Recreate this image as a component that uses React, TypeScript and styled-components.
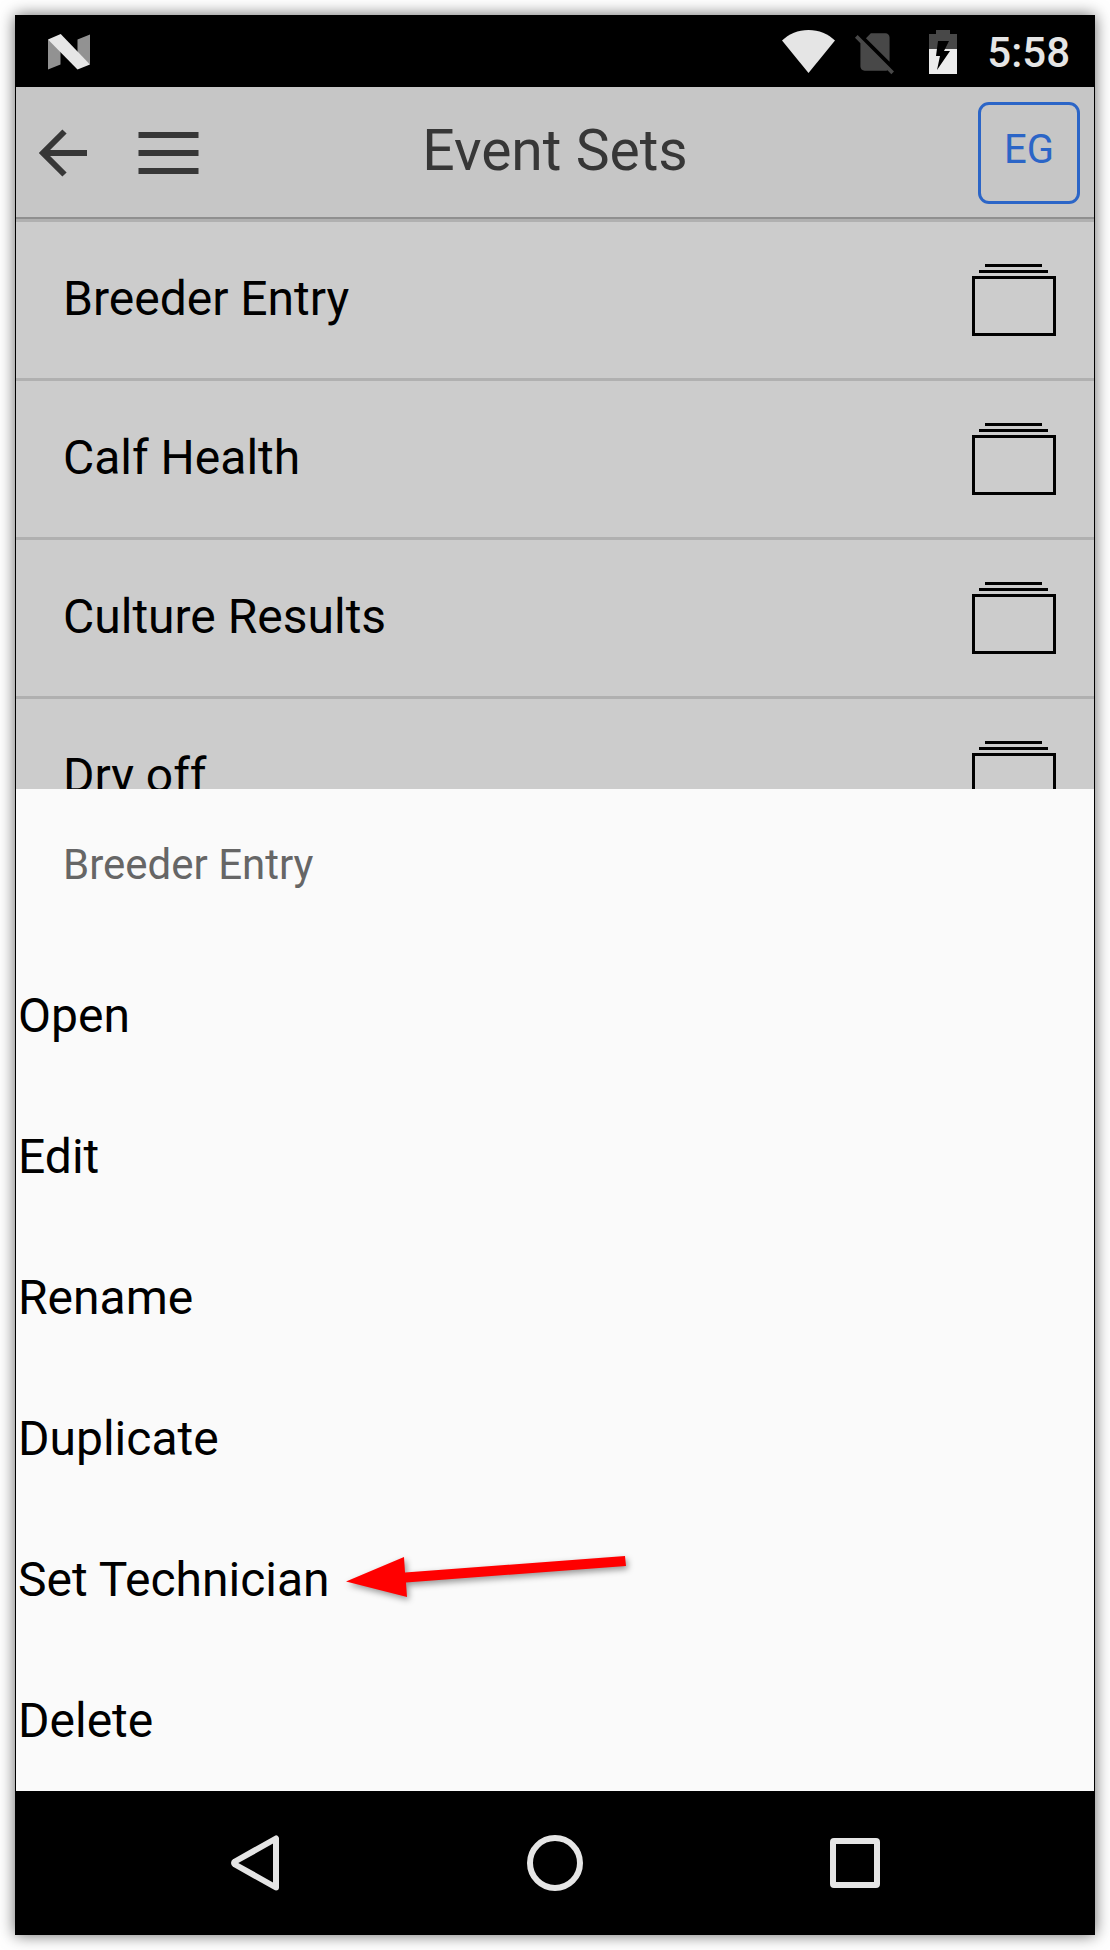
import React from "react";
import styled, { createGlobalStyle } from "styled-components";

const GlobalStyle = createGlobalStyle`
  *, *::before, *::after { box-sizing: border-box; }
  body {
    margin: 0;
    background: #ffffff;
    font-family: Roboto, "Noto Sans", sans-serif;
    color: #000000;
  }
  h1, h2, ul, p { margin: 0; padding: 0; font-weight: 400; }
  ul { list-style: none; }
  button {
    margin: 0;
    padding: 0;
    border: 0;
    background: none;
    color: inherit;
    font: inherit;
    cursor: pointer;
  }
  svg { display: block; flex: none; }
`;

const Page = styled.div`
  display: flex;
  min-height: 100vh;
  padding: 15px;
`;

const Device = styled.div`
  flex: 1;
  min-width: 0;
  display: flex;
  flex-direction: column;
  border: 1px solid #000000;
  background: #cccccc;
  box-shadow: 0 0 15px rgba(0, 0, 0, 0.6);
`;

const StatusBar = styled.div`
  display: flex;
  align-items: center;
  justify-content: space-between;
  height: 71px;
  padding: 0 24px 0 32px;
  background: #000000;
  color: #e5e5e5;
`;

const StatusIcons = styled.div`
  display: flex;
  align-items: center;
`;

const SimIcon = styled.svg`
  margin-left: 15px;
`;

const BatteryIcon = styled.svg`
  margin-left: 29px;
`;

const Clock = styled.time`
  margin-left: 30px;
  padding-top: 2px;
  font-size: 42px;
  line-height: 48px;
  font-weight: 500;
`;

const Toolbar = styled.header`
  display: grid;
  grid-template-columns: 1fr auto 1fr;
  align-items: center;
  padding: 15px 14px 13px;
  border-bottom: 2px solid #8f8f8f;
  background: #c6c6c6;
  color: #373737;
`;

const ToolbarStart = styled.nav`
  display: flex;
  align-items: center;
  gap: 51px;
  padding-left: 9px;
`;

const Title = styled.h1`
  padding-bottom: 4px;
  font-size: 57px;
  line-height: 68px;
`;

const ProfileButton = styled.button`
  justify-self: end;
  width: 102px;
  height: 102px;
  && {
    padding-bottom: 7px;
    border: 3px solid #2b65c7;
    border-radius: 11px;
    color: #2b65c7;
    font-size: 40px;
    line-height: 48px;
  }
`;

const SetList = styled.ul`
  flex: 1 1 0;
  min-height: 0;
  overflow: hidden;
`;

const SetRow = styled.li`
  display: flex;
  align-items: center;
  justify-content: space-between;
  height: 159px;
  padding: 0 38px 0 47px;
  border-top: 3px solid #b0b0b0;
`;

const SetName = styled.span`
  padding-bottom: 3px;
  font-size: 48px;
  line-height: 56px;
`;

const Sheet = styled.section`
  flex: none;
  background: #fafafa;
`;

const SheetTitle = styled.h2`
  padding: 52px 47px 56px;
  color: #666666;
  font-size: 42px;
  line-height: 48px;
`;

const ActionItem = styled.li`
  position: relative;
`;

const ActionButton = styled.button`
  display: block;
  width: 100%;
  && {
    padding: 43px 2px 42px;
    font-size: 48px;
    line-height: 56px;
    text-align: left;
  }
`;

const Pointer = styled.svg`
  position: absolute;
  left: 324px;
  top: 41px;
  pointer-events: none;
  filter: drop-shadow(2px 3px 3px rgba(0, 0, 0, 0.4));
`;

const NavBar = styled.nav`
  flex: none;
  display: flex;
  justify-content: center;
  height: 143px;
  background: #000000;
`;

const NavButton = styled.button`
  display: flex;
  align-items: center;
  justify-content: center;
  flex: 0 1 300px;
`;

const eventSets = ["Breeder Entry", "Calf Health", "Culture Results", "Dry off"];

const actions = ["Open", "Edit", "Rename", "Duplicate", "Set Technician", "Delete"];

const highlightedAction = "Set Technician";

function StackIcon() {
  return (
    <svg width="84" height="72" viewBox="0 0 84 72" aria-hidden="true">
      <path d="M13 0h57v3H13zM7 6h69v3H7z" fill="#000" />
      <rect x="1.5" y="13.5" width="81" height="57" fill="none" stroke="#000" strokeWidth="3" />
    </svg>
  );
}

export default function App() {
  return (
    <Page>
      <GlobalStyle />
      <Device>
        <StatusBar>
          <svg width="42" height="36" viewBox="0 0 42 36" aria-hidden="true">
            <path d="M0 5.5V35.5L12.5 30.5V12zM29.500 5.500L42 .5V30.500L29.500 20z" fill="#929292" />
            <path d="M0 5.500L12.700 0L42 30.500L29.500 35.500z" fill="#e6e6e6" />
          </svg>
          <StatusIcons>
            <svg width="53" height="43" viewBox="0 0 53 43" aria-hidden="true">
              <path d="M0 10.500C7 4 16 0 26.500 0S46 4 53 10.500L26.500 43z" fill="#e5e5e5" />
            </svg>
            <SimIcon width="50" height="50" viewBox="0 0 24 24" aria-hidden="true">
              <path
                d="M18.990 5c0-1.100-.890-2-1.990-2h-7L7.660 5.340 19 16.680 18.990 5zM3.650 3.880L2.380 5.150 5 7.770V19c0 1.100.900 2 2 2h10.010c.350 0 .670-.100.960-.260l1.880 1.880 1.270-1.270L3.650 3.880z"
                fill="#484848"
              />
            </SimIcon>
            <BatteryIcon width="28" height="44" viewBox="0 0 28 44" aria-hidden="true">
              <path d="M7 0h14v4h7v16H0V4h7z" fill="#484848" />
              <path d="M0 19h28v25H0z" fill="#ececec" />
              <path d="M9 11h11l-5 10h6L8 40l3-14H7z" fill="#000" />
            </BatteryIcon>
            <Clock>5:58</Clock>
          </StatusIcons>
        </StatusBar>

        <Toolbar>
          <ToolbarStart aria-label="Main">
            <button type="button" aria-label="Back">
              <svg width="48" height="48" viewBox="0 0 48 48" aria-hidden="true">
                <path d="M25.500 2.500L4 24L25.500 45.500M4.500 24H48" fill="none" stroke="#373737" strokeWidth="6" />
              </svg>
            </button>
            <button type="button" aria-label="Menu">
              <svg width="61" height="42" viewBox="0 0 61 42" aria-hidden="true">
                <path d="M.5 0h60v6H.5zM.5 18h60v6H.5zM.5 36h60v6H.5z" fill="#373737" />
              </svg>
            </button>
          </ToolbarStart>
          <Title>Event Sets</Title>
          <ProfileButton type="button">EG</ProfileButton>
        </Toolbar>

        <SetList>
          {eventSets.map((name) => (
            <SetRow key={name}>
              <SetName>{name}</SetName>
              <StackIcon />
            </SetRow>
          ))}
        </SetList>

        <Sheet aria-labelledby="sheet-title">
          <SheetTitle id="sheet-title">Breeder Entry</SheetTitle>
          <ul>
            {actions.map((action) => (
              <ActionItem key={action}>
                <ActionButton type="button">{action}</ActionButton>
                {action === highlightedAction && (
                  <Pointer width="292" height="56" viewBox="0 0 292 56" aria-hidden="true">
                    <path d="M6 31.500L64 7L65 22.500L285 6L286 16L66 32.500L67 47z" fill="#ff0000" />
                  </Pointer>
                )}
              </ActionItem>
            ))}
          </ul>
        </Sheet>

        <NavBar aria-label="System">
          <NavButton type="button" aria-label="Back">
            <svg width="48" height="56" viewBox="0 0 48 56" aria-hidden="true">
              <path
                d="M45 3.500V52.500L4 29.500Q2 28 4 26.500z"
                fill="none"
                stroke="#e5e5e5"
                strokeWidth="6"
                strokeLinejoin="round"
              />
            </svg>
          </NavButton>
          <NavButton type="button" aria-label="Home">
            <svg width="56" height="56" viewBox="0 0 56 56" aria-hidden="true">
              <circle cx="28" cy="28" r="25" fill="none" stroke="#e5e5e5" strokeWidth="6" />
            </svg>
          </NavButton>
          <NavButton type="button" aria-label="Recent apps">
            <svg width="50" height="50" viewBox="0 0 50 50" aria-hidden="true">
              <rect x="3" y="3" width="44" height="44" rx="1" fill="none" stroke="#e5e5e5" strokeWidth="6" strokeLinejoin="round" />
            </svg>
          </NavButton>
        </NavBar>
      </Device>
    </Page>
  );
}
